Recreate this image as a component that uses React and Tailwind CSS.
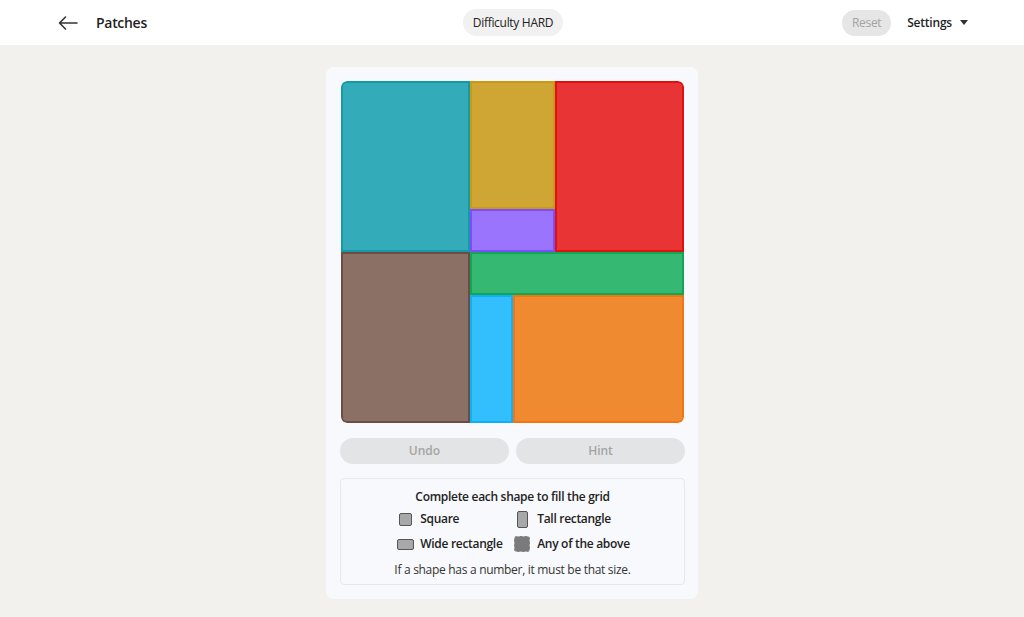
import React from "react";

const pieces = [
  { c: "1 / 4", r: "1 / 5", bg: "bg-[#33abb8]", bd: "border-[#149aa7]", rounded: "rounded-tl-md" },
  { c: "4 / 6", r: "1 / 4", bg: "bg-[#cfa533]", bd: "border-[#c99a14]" },
  { c: "6 / 9", r: "1 / 5", bg: "bg-[#e83434]", bd: "border-[#e01010]", rounded: "rounded-tr-md" },
  { c: "4 / 6", r: "4 / 5", bg: "bg-[#9b74fe]", bd: "border-[#7c4dff]" },
  { c: "1 / 4", r: "5 / 9", bg: "bg-[#8b7066]", bd: "border-[#6d4c43]", rounded: "rounded-bl-md" },
  { c: "4 / 9", r: "5 / 6", bg: "bg-[#34b872]", bd: "border-[#10a656]" },
  { c: "4 / 5", r: "6 / 9", bg: "bg-[#33bffe]", bd: "border-[#0fb0f6]" },
  { c: "5 / 9", r: "6 / 9", bg: "bg-[#f08a31]", bd: "border-[#f37410]", rounded: "rounded-br-md" },
];

export default function App() {
  return (
    <div
      className="w-[1024px] h-[617px] bg-[#f2f1ed] flex flex-col text-[#1f1f1f]"
      style={{ fontFamily: '"Open Sans", "Noto Sans", sans-serif' }}
    >
      <header className="h-[45px] bg-white flex items-center justify-between pl-[58px] pr-[56px] shrink-0">
        <div className="flex items-center w-[300px]">
          <svg width="20" height="14" viewBox="0 0 20 14" fill="none" stroke="#333" strokeWidth="1.6" strokeLinecap="round" strokeLinejoin="round">
            <path d="M19 7H1.5M7.5 1L1.5 7l6 6" />
          </svg>
          <span className="ml-[18px] text-[14px] font-semibold tracking-[-0.3px]">Patches</span>
        </div>
        <div className="h-[27px] px-[10px] rounded-full bg-[#f1f1f1] flex items-center text-[12px] tracking-[-0.3px] text-[#222]">
          Difficulty HARD
        </div>
        <div className="flex items-center justify-end w-[300px]">
          <div className="h-[26px] w-[49px] rounded-full bg-[#e6e6e6] flex items-center justify-center text-[12px] tracking-[-0.3px] text-[#a3a3a3]">
            Reset
          </div>
          <div className="ml-[16px] flex items-center text-[12px] font-semibold tracking-[-0.2px]">
            Settings
            <svg className="ml-[8px]" width="8" height="5" viewBox="0 0 8 5"><path d="M0 0h8L4 5z" fill="#333" /></svg>
          </div>
        </div>
      </header>

      <main className="flex-1 flex justify-center pt-[22px]">
        <div className="w-[372px] h-[532px] bg-[#f8f9fc] rounded-lg pl-[14px] pr-[13px] pt-[14px] flex flex-col">
          <div className="mx-[1px] w-[343px] h-[342px] grid grid-cols-8 grid-rows-8 rounded-md overflow-hidden">
            {pieces.map((p, i) => (
              <div
                key={i}
                className={`${p.bg} ${p.bd} border-2 ${p.rounded || ""}`}
                style={{ gridColumn: p.c, gridRow: p.r }}
              />
            ))}
          </div>

          <div className="flex gap-[7px] mt-[15px]">
            <div className="flex-1 h-[26px] rounded-full bg-[#e3e4e6] flex items-center justify-center text-[12px] font-semibold text-[#a4a4a4]">Undo</div>
            <div className="flex-1 h-[26px] rounded-full bg-[#e3e4e6] flex items-center justify-center text-[12px] font-semibold text-[#a4a4a4]">Hint</div>
          </div>

          <div className="mt-[14px] w-[345px] h-[107px] border border-[#e6e8ec] rounded-sm flex flex-col items-center pt-[9px]">
            <div className="text-[12px] font-semibold tracking-[-0.3px] text-[#222]">Complete each shape to fill the grid</div>
            <div className="grid grid-cols-[117px_auto] gap-y-[5px] mt-[3px] text-[12px] font-semibold tracking-[-0.3px] text-[#222]">
              <div className="flex items-center h-[20px]">
                <span className="w-[20px] flex items-center justify-center">
                  <span className="w-[13px] h-[13px] bg-[#a8a8a8] border border-[#555] rounded-[2px]" />
                </span>
                <span className="ml-[5px]">Square</span>
              </div>
              <div className="flex items-center h-[20px]">
                <span className="w-[20px] flex items-center justify-center">
                  <span className="w-[11px] h-[17px] bg-[#a8a8a8] border border-[#555] rounded-[2px]" />
                </span>
                <span className="ml-[5px]">Tall rectangle</span>
              </div>
              <div className="flex items-center h-[20px]">
                <span className="w-[20px] flex items-center justify-center">
                  <span className="w-[17px] h-[11px] bg-[#a8a8a8] border border-[#555] rounded-[2px]" />
                </span>
                <span className="ml-[5px]">Wide rectangle</span>
              </div>
              <div className="flex items-center h-[20px]">
                <span className="w-[20px] flex items-center justify-center">
                  <span className="w-[16px] h-[16px] bg-[#7a7a7a] border border-dashed border-[#aaa] rounded-[3px]" />
                </span>
                <span className="ml-[5px]">Any of the above</span>
              </div>
            </div>
            <div className="mt-[7px] text-[12px] text-[#333] tracking-[-0.3px]">If a shape has a number, it must be that size.</div>
          </div>
        </div>
      </main>
    </div>
  );
}
